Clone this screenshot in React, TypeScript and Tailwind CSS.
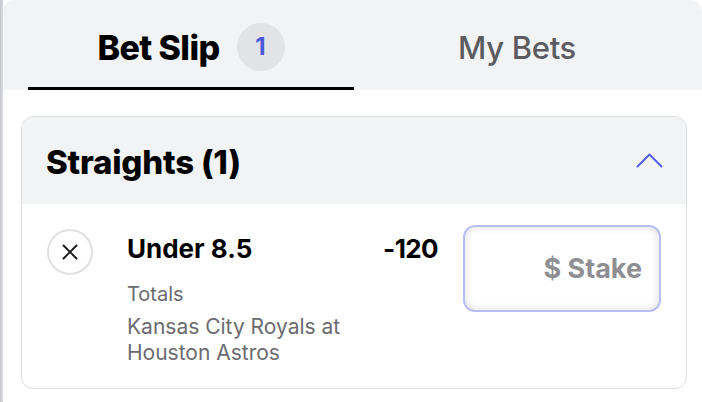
import React from "react";

const font = { fontFamily: "Inter, 'Noto Sans', sans-serif" };

const CloseIcon = () => (
  <svg width="16" height="16" viewBox="0 0 16 16" fill="none">
    <path d="M1.5 1.5 14.5 14.5M14.5 1.5 1.5 14.5" stroke="#151515" strokeWidth="1.8" strokeLinecap="round" />
  </svg>
);

const ChevronUp = () => (
  <svg width="27" height="15" viewBox="0 0 27 15" fill="none">
    <path d="M1.5 13.5 13.5 1.5 25.5 13.5" stroke="#5860e6" strokeWidth="2" strokeLinecap="round" strokeLinejoin="round" />
  </svg>
);

export default function App() {
  return (
    <div className="flex w-[702px] h-[402px] bg-white overflow-hidden" style={font}>
      <div className="w-[3px] h-full bg-gradient-to-r from-[#c4c5c9] to-[#dcdde0]" />
      <div className="flex-1 flex flex-col rounded-t-[12px] overflow-hidden bg-white">
        {/* tabs */}
        <div className="h-[90px] bg-[#f2f3f5] flex pl-[25px] pr-[22px]">
          <button className="flex-1 flex items-center justify-center gap-[17px] pt-[7px] border-b-[3px] border-black">
            <span className="text-[34px] font-extrabold tracking-[-0.6px] text-black">Bet Slip</span>
            <span className="w-[48px] h-[48px] rounded-full bg-[#e2e3e6] flex items-center justify-center text-[24px] font-bold text-[#4c5ad9]">
              1
            </span>
          </button>
          <button className="flex-1 flex items-center justify-center pt-[7px]">
            <span className="text-[31px] font-medium tracking-[-0.3px] text-[#5b5b60]">My Bets</span>
          </button>
        </div>

        {/* straights card */}
        <div className="mt-[26px] ml-[18px] w-[666px] rounded-[12px] border border-[#dcdde0] overflow-hidden">
          <div className="h-[87px] bg-[#f2f3f5] flex items-center justify-between pl-[24px] pr-[23px]">
            <span className="text-[33px] font-extrabold tracking-[-0.2px] text-black pt-[4px]">Straights (1)</span>
            <ChevronUp />
          </div>
          <div className="flex items-start pl-[25px] pr-[25px] pt-[21px] pb-[22px]">
            <button className="mt-[4px] w-[46px] h-[46px] rounded-full border-2 border-[#e0e0e4] flex items-center justify-center shrink-0">
              <CloseIcon />
            </button>
            <div className="ml-[34px] mt-[8px] flex-1 flex flex-col">
              <span className="text-[26px] leading-[32px] font-bold text-black">Under 8.5</span>
              <span className="mt-[16px] text-[20px] leading-[26px] text-[#6b6b70]">Totals</span>
              <span className="mt-[7px] text-[21px] leading-[26px] text-[#6b6b70] w-[230px]">
                Kansas City Royals at Houston Astros
              </span>
            </div>
            <span className="mt-[8px] text-[26px] leading-[32px] font-bold text-black tracking-[-0.6px]">-120</span>
            <div className="ml-[25px] w-[198px] h-[87px] rounded-[12px] border-2 border-[#b8bef3] shadow-[inset_0_0_8px_rgba(0,0,0,0.14)] flex items-center justify-end pr-[17px]">
              <span className="text-[27px] font-bold text-[#8e8e93] pt-[2px]">$ Stake</span>
            </div>
          </div>
        </div>
      </div>
    </div>
  );
}
